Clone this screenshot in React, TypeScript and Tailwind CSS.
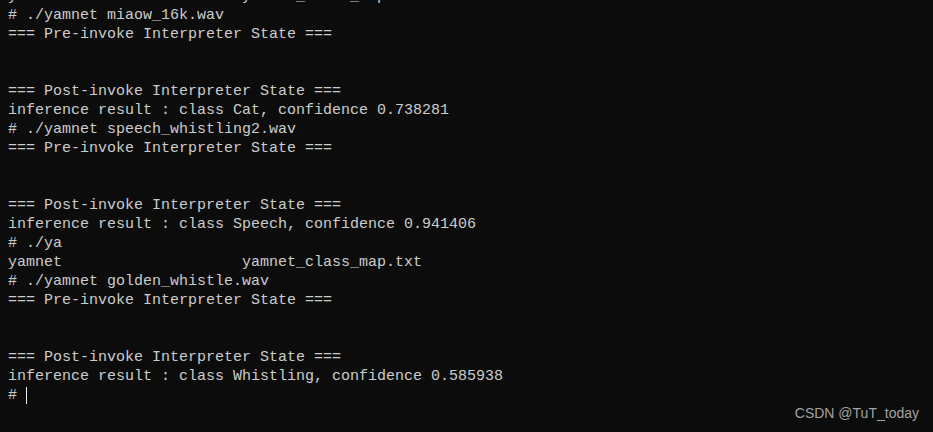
const lines: string[] = [
  'yamnet                    yamnet_class_map.txt',
  '# ./yamnet miaow_16k.wav',
  '=== Pre-invoke Interpreter State ===',
  '',
  '',
  '=== Post-invoke Interpreter State ===',
  'inference result : class Cat, confidence 0.738281',
  '# ./yamnet speech_whistling2.wav',
  '=== Pre-invoke Interpreter State ===',
  '',
  '',
  '=== Post-invoke Interpreter State ===',
  'inference result : class Speech, confidence 0.941406',
  '# ./ya',
  'yamnet                    yamnet_class_map.txt',
  '# ./yamnet golden_whistle.wav',
  '=== Pre-invoke Interpreter State ===',
  '',
  '',
  '=== Post-invoke Interpreter State ===',
  'inference result : class Whistling, confidence 0.585938',
];

export default function App() {
  return (
    <div className="relative w-[933px] h-[432px] overflow-hidden bg-[#0c0c0c]">
      <div className="-mt-[13px] pl-2 font-['Liberation_Mono',monospace] text-[15px] leading-[19px] text-[#cccccc] whitespace-pre">
        {lines.map((line, i) => (
          <div key={i} className="h-[19px]">
            {line}
          </div>
        ))}
        <div className="flex h-[19px] items-center">
          <span>{'# '}</span>
          <span className="w-px h-[17px] bg-[#f2f2f2]"></span>
        </div>
      </div>
      <div className="absolute right-[14px] bottom-[8px] font-['Liberation_Sans',sans-serif] text-[14px] text-[#a3a3a3]">
        CSDN @TuT_today
      </div>
    </div>
  );
}
